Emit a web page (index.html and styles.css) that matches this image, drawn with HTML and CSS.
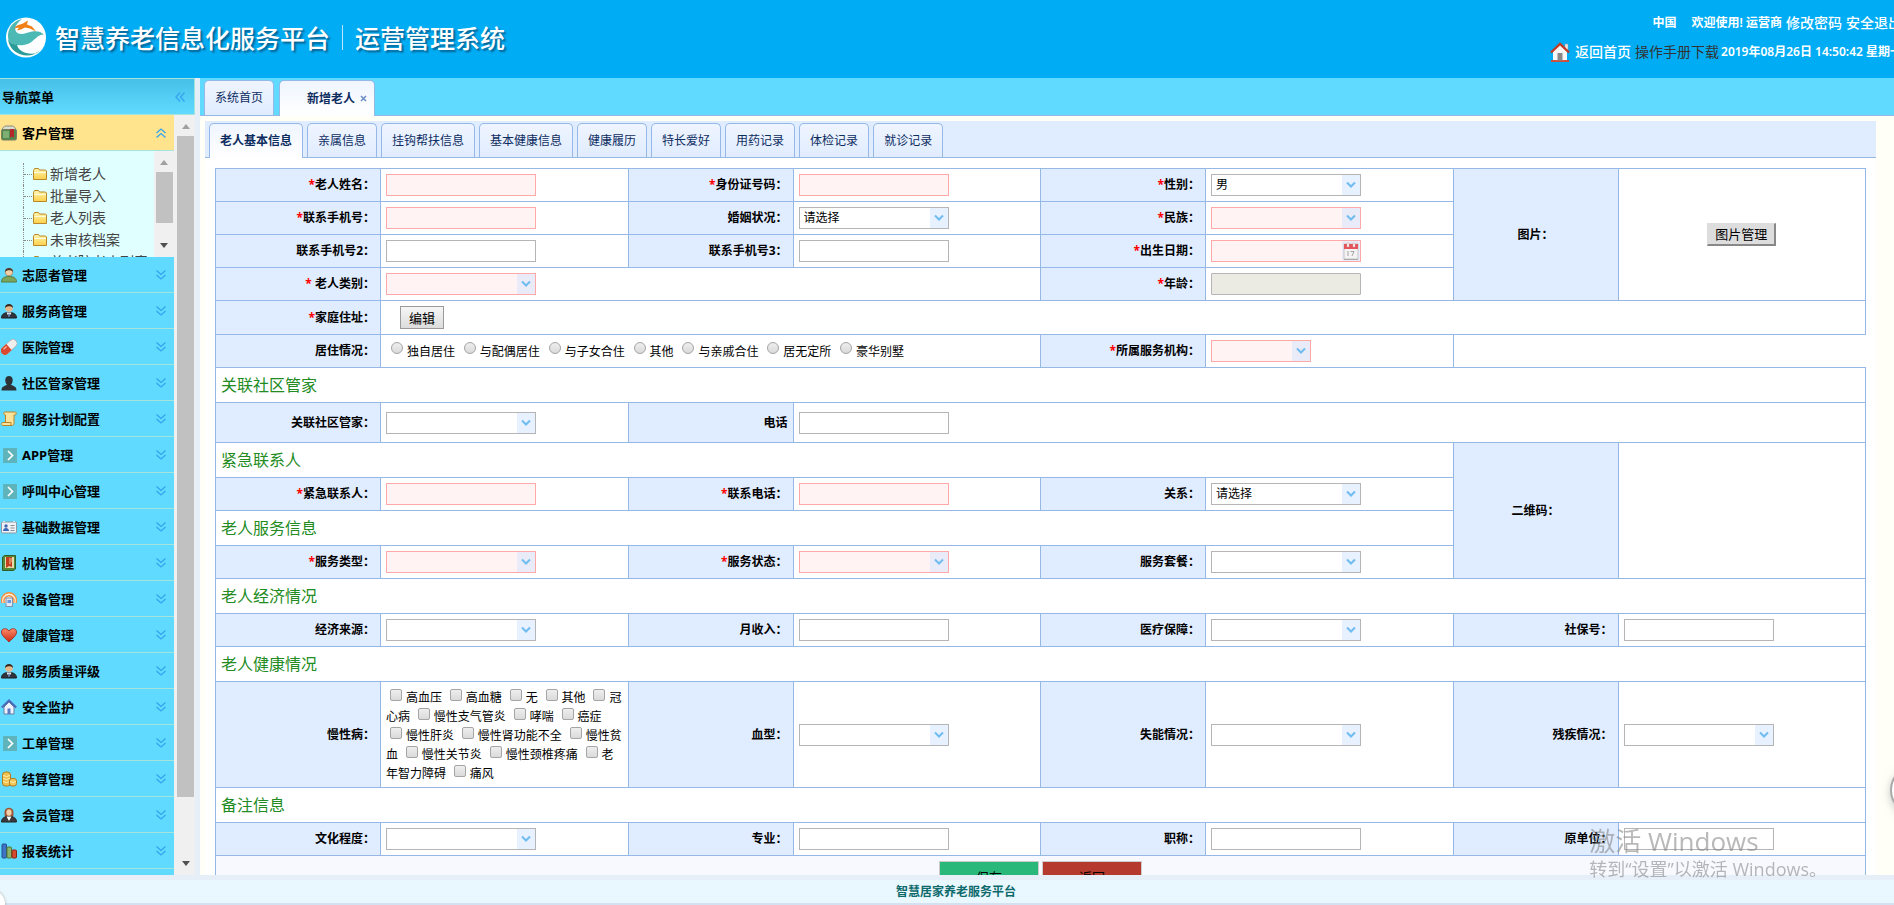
FILE: index.html
```html
<!DOCTYPE html>
<html lang="zh-CN">
<head>
<meta charset="utf-8">
<title>智慧养老信息化服务平台</title>
<link rel="stylesheet" href="styles.css">
</head>
<body>
<svg class="sprite" aria-hidden="true">
  <defs>
    <linearGradient id="gFolder" x1="0" y1="0" x2="0" y2="1"><stop offset="0" stop-color="#fff6b0"/><stop offset="1" stop-color="#ffd04a"/></linearGradient>
    <linearGradient id="gHeart" x1="0" y1="0" x2="0" y2="1"><stop offset="0" stop-color="#ff8a6a"/><stop offset="1" stop-color="#c92a12"/></linearGradient>
  </defs>
  <symbol id="down" viewBox="0 0 10 7"><path d="M1 1l4 4 4-4" fill="none" stroke="#6fbcf0" stroke-width="2"/></symbol>
  <symbol id="dbl" viewBox="0 0 12 12"><path d="M1.500 1.500L6 5.500l4.500-4M1.500 6L6 10l4.500-4" fill="none" stroke="#35a3ee" stroke-width="1.300"/></symbol>
  <symbol id="folder" viewBox="0 0 14 12"><path d="M.5 11.500V2.500l1-2h4l1 1.500h6l1 1v8.500z" fill="url(#gFolder)" stroke="#b8882a"/><path d="M1 4.500h12" stroke="#fffbe0"/></symbol>
  <symbol id="bag" viewBox="0 0 16 16"><path d="M1 6c0-3 2-5 4-5h6c2 0 4 2 4 5z" fill="#d9ddd0" stroke="#8b8b78"/><rect x=".5" y="4.500" width="15" height="10.500" rx="1.500" fill="#4f8a4c" stroke="#7d7d63"/><path d="M2 6h6v7H2z" fill="#7fae72"/><path d="M9 4h4v9l-2-1.500L9 13z" fill="#b5272a"/></symbol>
  <symbol id="green-user" viewBox="0 0 16 16"><path d="M.5 15c0-4 3-5.500 7.500-5.500s7.500 1.500 7.500 5.500z" fill="#7ba55a" stroke="#587a3e"/><circle cx="8" cy="5" r="3.800" fill="#f3cfa8" stroke="#9b6c3e" stroke-width=".6"/><path d="M4 5c-.5-5.500 8.500-5.500 8 0C11 3 6 2.500 4 5z" fill="#4a3a2c"/></symbol>
  <symbol id="suit-user" viewBox="0 0 16 16"><path d="M.5 15c0-4 3-5.500 7.500-5.500s7.500 1.500 7.500 5.500z" fill="#30343a" stroke="#1c1f24"/><path d="M5.500 9.500L8 14l2.500-4.500z" fill="#fff"/><path d="M8 10l1 2-1 2.500L7 12z" fill="#4169a8"/><circle cx="8" cy="5" r="3.800" fill="#e8b98c"/><path d="M4 5c-.5-5.500 8.500-5.500 8 0C11 3 6 2.500 4 5z" fill="#33281f"/></symbol>
  <symbol id="lady" viewBox="0 0 16 16"><path d="M4 10C3 6 3 .8 8 .8S13 6 12 10z" fill="#9c5636"/><path d="M.5 15c0-4 3-5.500 7.500-5.500s7.500 1.500 7.500 5.500z" fill="#3a3a3e" stroke="#222"/><path d="M5.500 9.500L8 14l2.500-4.500z" fill="#fff"/><ellipse cx="8" cy="5.500" rx="2.600" ry="3.300" fill="#f3cfa8"/></symbol>
  <symbol id="dark-user" viewBox="0 0 16 16"><path d="M.5 15.500c0-4 2.500-4.500 5.500-5.500C3 6 4 1 8 1s5 5 2 9c3 1 5.500 1.500 5.500 5.500z" fill="#2c3237"/></symbol>
  <symbol id="pill" viewBox="0 0 16 16"><g transform="rotate(-42 8 8)"><rect x="-1.500" y="4" width="19" height="8" rx="4" fill="#eee" stroke="#999" stroke-width=".6"/><path d="M8 4H2.500a4 4 0 000 8H8z" fill="#d9482f"/><path d="M2.500 6h4" stroke="#ffb9a4" stroke-width="1.200"/></g></symbol>
  <symbol id="scroll" viewBox="0 0 16 16"><path d="M3.500 1h11c1 0 1 3-.5 3h-1v8.500c0 1-1 2-2 2H2c-2 0-2-3 0-3h2.500V4C3 4 2 2 3.500 1z" fill="#fbe39b" stroke="#b98426"/><path d="M2 11.500h8v3" fill="none" stroke="#b98426"/></symbol>
  <symbol id="go" viewBox="0 0 16 16"><rect x="2" y="1" width="14" height="15" fill="#5fb3ba"/><path d="M7 4l4.500 4.500L7 13" fill="none" stroke="#fff" stroke-width="1.700"/></symbol>
  <symbol id="card" viewBox="0 0 16 16"><rect x=".5" y="3" width="15" height="11" rx="1" fill="#eef1f5" stroke="#8b97a6"/><circle cx="5" cy="7" r="1.700" fill="#3b66b5"/><path d="M2 12c0-4 6-4 6 0z" fill="#3b66b5"/><path d="M9.500 6.500h4M9.500 9h4M9.500 11.500h4" stroke="#8a8f96"/><path d="M2 2.500h2M12 2.500h2" stroke="#ddd"/></symbol>
  <symbol id="book" viewBox="0 0 16 16"><path d="M1.500 2l2-1.500h11V14l-2 1.500h-11z" fill="#4f8a3d" stroke="#2f5f24"/><path d="M4 2h9v11H4z" fill="#e6d9a8"/><path d="M5 2h6v10l-3-1-3 2z" fill="#c2401f"/><path d="M8 4h3M8 6h3M8 8h2" stroke="#f5c28c"/></symbol>
  <symbol id="device" viewBox="0 0 16 16"><path d="M1 12A7.500 7.500 0 1115 12M3.500 12a5 5 0 119 0" fill="#fff0e0" stroke="#f0913f" stroke-width="1.400"/><rect x="5" y="7" width="6.500" height="8.500" fill="#dfe8f4" stroke="#7d93b4"/><path d="M6.500 9h3.500v3H6.500z" fill="#6c99dc"/></symbol>
  <symbol id="heart" viewBox="0 0 16 16"><path d="M8 15C4 11 .5 8.500.5 5 .5 1 5.500.500 8 4c2.500-3.500 7.500-3 7.500 1C15.500 8.500 12 11 8 15z" fill="url(#gHeart)" stroke="#a3200f" stroke-width=".8"/></symbol>
  <symbol id="blue-home" viewBox="0 0 16 16"><path d="M3 8l5-5 5 5v7H3z" fill="#eef3fb" stroke="#6a7ea8"/><path d="M.8 8.500L8 1.500l7.200 7" fill="none" stroke="#4b6ab8" stroke-width="2"/><path d="M6.500 9.500h3V15h-3z" fill="#5a79c2"/></symbol>
  <symbol id="coins" viewBox="0 0 16 16"><rect x="1.500" y="1" width="8" height="14" rx="3" fill="#f0c04c" stroke="#b07b1c"/><path d="M2 4.500q3.500 2 7 0M2 7.500q3.500 2 7 0M2 10.500q3.500 2 7 0" fill="none" stroke="#fff0b5"/><rect x="8.500" y="7.500" width="7" height="7.500" rx="2.500" fill="#f2c65a" stroke="#b07b1c"/><path d="M9 10.500q3 2 6 0" fill="none" stroke="#fff0b5"/></symbol>
  <symbol id="chart" viewBox="0 0 16 16"><rect x="1" y="1" width="4.500" height="14" rx="1" fill="#3f74c4" stroke="#234c8c"/><rect x="6" y="4" width="4.500" height="11" rx="1" fill="#8cb56b" stroke="#4e7a33"/><rect x="11" y="7" width="4.500" height="8" rx="1" fill="#d64b30" stroke="#8f2412"/></symbol>
</svg>

<header class="top">
  <div class="brand">
    <svg class="logo" viewBox="0 0 40 40" aria-hidden="true"><circle cx="20" cy="20" r="20" fill="#fff"/><path d="M2 17C3 8 9 3 16 1.500 10 6 8 11 10 14c4 5 10 1 16 0 5-1 9 0 12 3-7 0-9 6-15 9-7 3-16 2-20-2-1-2-1-5-1-7z" fill="#4cb9b5"/><path d="M2 22c2 4 6 5 9 5 1 6 8 10 18 9l5-3c-5 5-13 6-19 4C8 35 3 29 2 22z" fill="#2a9c98"/><path d="M17 6l5-3-1 4 5 2 4 5-6-3-5-1-4 2-4 1 2-3-5 1 3-3z" fill="#f08017"/></svg>
    <h1>智慧养老信息化服务平台<i></i>运营管理系统</h1>
  </div>
  <div class="user">
    <p><b class="place">中国</b><b>欢迎使用! 运营商</b><a href="#">修改密码</a><a href="#">安全退出</a></p>
    <p><svg class="home" viewBox="0 0 20 20" aria-hidden="true"><path d="M15 2h3v6h-3z" fill="#eee" stroke="#999" stroke-width=".6"/><path d="M3 9l7-7 7 7v10H3z" fill="#f7f7f7"/><path d="M1 10.500L10 1.800l9 8.700" fill="none" stroke="#c23a22" stroke-width="2.400"/><path d="M1 19h18" stroke="#d8452c" stroke-width="1.800"/><path d="M7.500 11h5v7.500h-5z" fill="#888"/></svg><a href="#">返回首页</a><a class="manual" href="#">操作手册下载</a><b>2019年08月26日 14:50:42 星期一</b></p>
  </div>
</header>

<div class="middle">
  <aside class="side">
    <div class="side-title"><span>导航菜单</span><svg class="collapse" width="12" height="12" aria-hidden="true"><use href="#dbl"/></svg></div>
    <div class="side-body">
      <nav class="menu">
        <button class="item open"><svg><use href="#bag"/></svg><span>客户管理</span><svg class="arr"><use href="#dbl"/></svg></button>
        <div class="sub">
          <ul>
            <li><svg><use href="#folder"/></svg><a href="#">新增老人</a></li>
            <li><svg><use href="#folder"/></svg><a href="#">批量导入</a></li>
            <li><svg><use href="#folder"/></svg><a href="#">老人列表</a></li>
            <li><svg><use href="#folder"/></svg><a href="#">未审核档案</a></li>
            <li><svg><use href="#folder"/></svg><a href="#">养老院老人列表</a></li>
          </ul>
          <div class="bar inner"><i class="up"></i><i class="thumb"></i><i class="dn"></i></div>
        </div>
        <button class="item"><svg><use href="#green-user"/></svg><span>志愿者管理</span><svg class="arr"><use href="#dbl"/></svg></button>
        <button class="item"><svg><use href="#suit-user"/></svg><span>服务商管理</span><svg class="arr"><use href="#dbl"/></svg></button>
        <button class="item"><svg><use href="#pill"/></svg><span>医院管理</span><svg class="arr"><use href="#dbl"/></svg></button>
        <button class="item"><svg><use href="#dark-user"/></svg><span>社区管家管理</span><svg class="arr"><use href="#dbl"/></svg></button>
        <button class="item"><svg><use href="#scroll"/></svg><span>服务计划配置</span><svg class="arr"><use href="#dbl"/></svg></button>
        <button class="item"><svg><use href="#go"/></svg><span>APP管理</span><svg class="arr"><use href="#dbl"/></svg></button>
        <button class="item"><svg><use href="#go"/></svg><span>呼叫中心管理</span><svg class="arr"><use href="#dbl"/></svg></button>
        <button class="item"><svg><use href="#card"/></svg><span>基础数据管理</span><svg class="arr"><use href="#dbl"/></svg></button>
        <button class="item"><svg><use href="#book"/></svg><span>机构管理</span><svg class="arr"><use href="#dbl"/></svg></button>
        <button class="item"><svg><use href="#device"/></svg><span>设备管理</span><svg class="arr"><use href="#dbl"/></svg></button>
        <button class="item"><svg><use href="#heart"/></svg><span>健康管理</span><svg class="arr"><use href="#dbl"/></svg></button>
        <button class="item"><svg><use href="#suit-user"/></svg><span>服务质量评级</span><svg class="arr"><use href="#dbl"/></svg></button>
        <button class="item"><svg><use href="#blue-home"/></svg><span>安全监护</span><svg class="arr"><use href="#dbl"/></svg></button>
        <button class="item"><svg><use href="#go"/></svg><span>工单管理</span><svg class="arr"><use href="#dbl"/></svg></button>
        <button class="item"><svg><use href="#coins"/></svg><span>结算管理</span><svg class="arr"><use href="#dbl"/></svg></button>
        <button class="item"><svg><use href="#lady"/></svg><span>会员管理</span><svg class="arr"><use href="#dbl"/></svg></button>
        <button class="item"><svg><use href="#chart"/></svg><span>报表统计</span><svg class="arr"><use href="#dbl"/></svg></button>
      </nav>
      <div class="bar outer"><i class="up"></i><i class="thumb"></i><i class="dn"></i></div>
    </div>
  </aside>

  <main class="main">
    <div class="tabs outer-tabs">
      <button class="tab">系统首页</button>
      <button class="tab on closable">新增老人<svg width="7" height="7" viewBox="0 0 7 7" aria-hidden="true"><path d="M1 1l5 5M6 1L1 6" stroke="#6a8fc4" stroke-width="1.500"/></svg></button>
    </div>
    <div class="panel">
      <div class="tabs inner-tabs">
        <button class="tab on">老人基本信息</button>
        <button class="tab">亲属信息</button>
        <button class="tab">挂钩帮扶信息</button>
        <button class="tab">基本健康信息</button>
        <button class="tab">健康履历</button>
        <button class="tab">特长爱好</button>
        <button class="tab">用药记录</button>
        <button class="tab">体检记录</button>
        <button class="tab">就诊记录</button>
      </div>
      <form class="form">
        <table>
          <colgroup><col class="cl"><col class="cv"><col class="cl"><col class="cv"><col class="cl"><col class="cv"><col class="cl"><col class="cv"></colgroup>
          <tr>
            <th><label for="f1"><em>*</em>老人姓名：</label></th><td><input class="box req" id="f1"></td>
            <th><label for="f2"><em>*</em>身份证号码：</label></th><td><input class="box req" id="f2"></td>
            <th><label for="f3"><em>*</em>性别：</label></th><td><span class="combo"><select id="f3"><option>男</option><option>女</option></select><svg><use href="#down"/></svg></span></td>
            <th rowspan="4" class="mid">图片：</th><td rowspan="4" class="mid"><button type="button" class="pic">图片管理</button></td>
          </tr>
          <tr>
            <th><label for="f4"><em>*</em>联系手机号：</label></th><td><input class="box req" id="f4"></td>
            <th><label for="f5">婚姻状况：</label></th><td><span class="combo"><select id="f5"><option>请选择</option></select><svg><use href="#down"/></svg></span></td>
            <th><label for="f6"><em>*</em>民族：</label></th><td><span class="combo req"><select id="f6"><option></option></select><svg><use href="#down"/></svg></span></td>
          </tr>
          <tr>
            <th><label for="f7">联系手机号2：</label></th><td><input class="box" id="f7"></td>
            <th><label for="f8">联系手机号3：</label></th><td><input class="box" id="f8"></td>
            <th><label for="f9"><em>*</em>出生日期：</label></th><td><span class="combo req"><input id="f9"><svg class="cal" viewBox="0 0 18 20"><rect x="2" y="3" width="14" height="15" fill="#f4f2f2" stroke="#bbb" stroke-width=".8"/><path d="M2 3h14v5H2z" fill="#e4555c"/><path d="M5 2h2v4H5zM11 2h2v4h-2z" fill="#fff" stroke="#c99" stroke-width=".5"/><path d="M6 10v5M8.500 10.500H12L10 15" fill="none" stroke="#a5a5a5"/><path d="M2 18.500h14" stroke="#aaa"/></svg></span></td>
          </tr>
          <tr>
            <th><label for="f10"><em>*</em> 老人类别：</label></th><td colspan="3"><span class="combo req"><select id="f10"><option></option></select><svg><use href="#down"/></svg></span></td>
            <th><label for="f11"><em>*</em>年龄：</label></th><td><input class="box off" id="f11" disabled></td>
          </tr>
          <tr>
            <th><em>*</em>家庭住址：</th><td colspan="7"><button type="button" class="edit">编辑</button></td>
          </tr>
          <tr>
            <th>居住情况：</th>
            <td colspan="3" class="opts radios"><label><input type="radio" name="live">独自居住</label> <label><input type="radio" name="live">与配偶居住</label> <label><input type="radio" name="live">与子女合住</label> <label><input type="radio" name="live">其他</label> <label><input type="radio" name="live">与亲戚合住</label> <label><input type="radio" name="live">居无定所</label> <label><input type="radio" name="live">豪华别墅</label></td>
            <th><label for="f12"><em>*</em>所属服务机构：</label></th><td><span class="combo req short"><select id="f12"><option></option></select><svg><use href="#down"/></svg></span></td>
          </tr>
          <tr><td colspan="8" class="sec">关联社区管家</td></tr>
          <tr class="tall">
            <th><label for="f13">关联社区管家：</label></th><td><span class="combo"><select id="f13"><option></option></select><svg><use href="#down"/></svg></span></td>
            <th><label for="f14">电话</label></th><td colspan="5"><input class="box" id="f14"></td>
          </tr>
          <tr><td colspan="6" class="sec">紧急联系人</td><th rowspan="4" class="mid">二维码：</th><td rowspan="4"></td></tr>
          <tr>
            <th><label for="f15"><em>*</em>紧急联系人：</label></th><td><input class="box req" id="f15"></td>
            <th><label for="f16"><em>*</em>联系电话：</label></th><td><input class="box req" id="f16"></td>
            <th><label for="f17">关系：</label></th><td><span class="combo"><select id="f17"><option>请选择</option></select><svg><use href="#down"/></svg></span></td>
          </tr>
          <tr><td colspan="6" class="sec">老人服务信息</td></tr>
          <tr>
            <th><label for="f18"><em>*</em>服务类型：</label></th><td><span class="combo req"><select id="f18"><option></option></select><svg><use href="#down"/></svg></span></td>
            <th><label for="f19"><em>*</em>服务状态：</label></th><td><span class="combo req"><select id="f19"><option></option></select><svg><use href="#down"/></svg></span></td>
            <th><label for="f20">服务套餐：</label></th><td><span class="combo"><select id="f20"><option></option></select><svg><use href="#down"/></svg></span></td>
          </tr>
          <tr><td colspan="8" class="sec">老人经济情况</td></tr>
          <tr>
            <th><label for="f21">经济来源：</label></th><td><span class="combo"><select id="f21"><option></option></select><svg><use href="#down"/></svg></span></td>
            <th><label for="f22">月收入：</label></th><td><input class="box" id="f22"></td>
            <th><label for="f23">医疗保障：</label></th><td><span class="combo"><select id="f23"><option></option></select><svg><use href="#down"/></svg></span></td>
            <th><label for="f24">社保号：</label></th><td><input class="box" id="f24"></td>
          </tr>
          <tr><td colspan="8" class="sec">老人健康情况</td></tr>
          <tr>
            <th>慢性病：</th>
            <td class="opts checks"><label><input type="checkbox">高血压</label> <label><input type="checkbox">高血糖</label> <label><input type="checkbox">无</label> <label><input type="checkbox">其他</label> <label><input type="checkbox">冠心病</label> <label><input type="checkbox">慢性支气管炎</label> <label><input type="checkbox">哮喘</label> <label><input type="checkbox">癌症</label> <label><input type="checkbox">慢性肝炎</label> <label><input type="checkbox">慢性肾功能不全</label> <label><input type="checkbox">慢性贫血</label> <label><input type="checkbox">慢性关节炎</label> <label><input type="checkbox">慢性颈椎疼痛</label> <label><input type="checkbox">老年智力障碍</label> <label><input type="checkbox">痛风</label></td>
            <th><label for="f25">血型：</label></th><td><span class="combo"><select id="f25"><option></option></select><svg><use href="#down"/></svg></span></td>
            <th><label for="f26">失能情况：</label></th><td><span class="combo"><select id="f26"><option></option></select><svg><use href="#down"/></svg></span></td>
            <th><label for="f27">残疾情况：</label></th><td><span class="combo"><select id="f27"><option></option></select><svg><use href="#down"/></svg></span></td>
          </tr>
          <tr><td colspan="8" class="sec">备注信息</td></tr>
          <tr>
            <th><label for="f28">文化程度：</label></th><td><span class="combo"><select id="f28"><option></option></select><svg><use href="#down"/></svg></span></td>
            <th><label for="f29">专业：</label></th><td><input class="box" id="f29"></td>
            <th><label for="f30">职称：</label></th><td><input class="box" id="f30"></td>
            <th><label for="f31">原单位：</label></th><td><input class="box" id="f31"></td>
          </tr>
          <tr><td colspan="8" class="actions"><div><button type="button" class="act save">保存</button><button type="button" class="act back">返回</button></div></td></tr>
        </table>
      </form>
    </div>
  </main>
</div>

<footer class="foot">智慧居家养老服务平台</footer>

<div class="ball right-ball"></div>
<div class="ball left-ball"></div>
<div class="activate"><strong>激活 Windows</strong><span>转到“设置”以激活 Windows。</span></div>
</body>
</html>
```
FILE: styles.css
```css
* { box-sizing: border-box; }
html, body { height: 100%; }
body {
  margin: 0;
  display: flex;
  flex-direction: column;
  overflow: hidden;
  background: #e6eef8;
  font: 12px/20px "Noto Sans", "Noto Sans CJK SC", sans-serif;
  color: #000;
}
button, input, select { font: inherit; color: inherit; margin: 0; }
a { text-decoration: none; color: inherit; }
.sprite { position: absolute; width: 0; height: 0; }

/* header */
.top {
  flex: none;
  height: 78px;
  display: flex;
  justify-content: space-between;
  overflow: hidden;
  background: #00adf5;
  color: #fff;
}
.brand { display: flex; align-items: flex-start; gap: 9px; padding: 17px 0 0 6px; }
.logo { width: 40px; height: 41px; }
.brand h1 {
  display: flex;
  align-items: center;
  margin: 0;
  font: 500 25px/40px "Noto Sans CJK SC", sans-serif;
  text-shadow: 2px 2px 2px #05608f;
}
.brand h1 i { width: 1px; height: 25px; margin: 0 12px; background: #b9e6fb; }
.user { margin-right: -8px; padding-top: 8px; }
.user p {
  display: flex;
  justify-content: flex-end;
  align-items: center;
  height: 29px;
  margin: 0;
  white-space: nowrap;
}
.user p b { font-weight: 600; }
.user a { margin-left: 4px; font-size: 14px; font-weight: 500; }
.user .place { margin-right: 15px; }
.user .manual { margin-right: 2px; color: #333; font-weight: 400; }
.home { width: 20px; height: 20px; margin-right: 1px; }

.middle { flex: 1; min-height: 0; display: flex; margin-bottom: 5px; }

/* sidebar */
.side { flex: none; width: 195px; margin-right: 5px; display: flex; flex-direction: column; background: #f0f0f0; }
.side-title {
  flex: none;
  height: 37px;
  display: flex;
  align-items: center;
  justify-content: space-between;
  padding: 0 8px 0 2px;
  border: 1px solid #a5e3df;
  border-left: 0;
  background: linear-gradient(#47c0e8, #60dbff);
  font-size: 13px;
  font-weight: 700;
}
.collapse { transform: rotate(90deg); }
.side-body { flex: 1; min-height: 0; display: flex; justify-content: space-between; }
.menu { width: 174px; overflow: hidden; background: #60dbff; }
.item {
  display: flex;
  align-items: center;
  width: 100%;
  height: 36px;
  padding: 0 7px 0 1px;
  border: 0;
  border-bottom: 1px solid #a5e3df;
  background: #60dbff;
  font-size: 13px;
  font-weight: 700;
  text-align: left;
}
.item svg { width: 16px; height: 16px; margin-right: 5px; }
.item span { flex: 1; }
.item .arr { width: 12px; height: 12px; margin: 0; }
.item.open { background: #ffe48d; }
.item.open .arr { transform: rotate(180deg); }
.sub { display: flex; justify-content: space-between; height: 106px; overflow: hidden; background: #e0ffff; }
.sub ul { margin: 0; padding: 12px 0 0 23px; list-style: none; overflow: hidden; }
.sub li {
  display: flex;
  align-items: center;
  height: 22px;
  border-left: 1px dotted #888;
  font-size: 14px;
  color: #444;
  white-space: nowrap;
}
.sub li::before { content: ""; width: 8px; margin-right: 1px; border-top: 1px dotted #888; }
.sub li svg { width: 14px; height: 12px; margin-right: 3px; }
.bar { flex: none; display: flex; flex-direction: column; align-items: center; background: #f0f0f0; }
.bar i { display: block; }
.bar .up, .bar .dn { width: 0; height: 0; border: 4px solid transparent; }
.bar .up { border-top: 0; border-bottom: 5px solid #a0a0a0; margin: 9px 0 7px; }
.bar .dn { border-bottom: 0; border-top: 5px solid #505050; margin-bottom: 9px; }
.bar .thumb { width: 17px; background: #c1c1c1; }
.bar.inner { width: 20px; }
.inner .thumb { height: 51px; margin-bottom: 20px; }
.bar.outer { width: 19px; }
.outer .thumb { flex: 1; margin-bottom: 64px; }

/* tabs */
.main { flex: 1; min-width: 0; display: flex; flex-direction: column; background: #fffff8; }
.tabs { flex: none; display: flex; align-items: flex-end; border-bottom: 1px solid #95b8e7; }
.tab {
  border: 1px solid #95b8e7;
  border-bottom: 0;
  border-radius: 5px 5px 0 0;
  padding: 0 10px;
  background: linear-gradient(#eff5ff, #e0ecff);
  color: #0e2d5f;
}
.tab.on { background: linear-gradient(#eff5ff, #fff); font-weight: 700; margin-bottom: -1px; }
.outer-tabs { height: 38px; gap: 5px; padding-left: 4px; background: #60dbff; }
.outer-tabs .tab { height: 35px; }
.outer-tabs .tab.on { height: 36px; }
.closable { display: flex; align-items: center; gap: 5px; padding: 0 7px 0 27px; }
.inner-tabs { height: 37px; gap: 4px; padding-left: 4px; background: #e0ecff; }
.inner-tabs .tab { height: 34px; }
.inner-tabs .tab.on { height: 35px; }

/* form */
.panel { flex: 1; min-height: 0; margin: 5px 18px 0 5px; overflow: hidden; background: #fff; }
.form { padding: 10px; }
table { width: 100%; table-layout: fixed; border-collapse: collapse; }
.cl { width: 10%; }
.cv { width: 15%; }
th, td { border: 1px solid #95b8e7; padding: 5px; text-align: left; }
th { background: #e0ecff; text-align: right; font-weight: 700; line-height: 20px; }
th.mid, td.mid { text-align: center; }
em { font-style: normal; color: #f00; }
.tall { height: 40px; }
.sec { font-size: 16px; line-height: 24px; color: #228b22; }
.box, .combo { width: 150px; height: 22px; border: 1px solid #b5b5b5; background: #fff; }
.box { display: block; padding: 0 4px; outline: 0; }
.combo { display: grid; grid-template-columns: 1fr 18px; }
.combo select, .combo input {
  grid-area: 1 / 1 / 2 / 3;
  appearance: none;
  width: 100%;
  height: 20px;
  padding: 0 18px 0 4px;
  border: 0;
  outline: 0;
  background: none;
}
.combo svg { grid-area: 1 / 2; width: 18px; height: 20px; padding: 6px 4px; background: #e8f1ff; pointer-events: none; }
.combo .cal { padding: 0; }
.req { border-color: #ffa8a8; background: #fff3f3; }
.req svg { background: #eaebf8; }
.short { width: 100px; }
.off { background: #ebebe4; border-radius: 1px; }
.edit {
  display: block;
  height: 23px;
  margin-left: 14px;
  padding: 0 8px;
  border: 1px solid #9a9a9a;
  background: linear-gradient(#f6f6f6, #dcdcdc);
  font-size: 13px;
  line-height: 20px;
}
.pic {
  height: 23px;
  padding: 0 7px;
  border: 1px solid #ddd;
  border-right: 2px solid #888;
  border-bottom: 2px solid #888;
  background: #ddd;
  font-size: 13px;
  line-height: 20px;
}
.opts { font-family: "DejaVu Sans", "Noto Sans CJK SC", sans-serif; line-height: 19px; }
.opts input { appearance: none; width: 12px; height: 12px; margin: 0 4px 1px; border: 1px solid #a5a5a5; background: linear-gradient(#eee, #dadada); }
.radios { padding: 6px 5px 4px; line-height: 22px; }
.radios input { border-radius: 50%; margin: 0 4px 2px 5px; }
.checks { padding: 7px 5px 3px; }
.checks input { border-radius: 2px; }
.actions { background: #f7f9ff; }
.actions div { display: flex; justify-content: center; gap: 3px; }
.act { width: 100px; height: 32px; border: 1px solid #ccc; font-size: 13px; }
.save { background: #29b87a; }
.back { background: #b5392c; }

/* footer */
.foot {
  flex: none;
  height: 25px;
  padding-left: 18px;
  border-bottom: 2px solid #d3e1f1;
  background: #e9f8fe;
  color: #0e6a6c;
  font-weight: 700;
  line-height: 23px;
  text-align: center;
}

/* floating layers */
.ball { position: fixed; border-radius: 50%; background: #fff; }
.right-ball { right: -46px; bottom: 90px; width: 50px; height: 50px; border: 2px solid #aaa; box-shadow: 0 3px 8px #9998; }
.left-ball { left: -22px; bottom: -12px; width: 27px; height: 27px; box-shadow: 0 0 3px #aaa; }
.activate {
  position: fixed;
  right: 67px;
  bottom: 24px;
  display: grid;
  color: rgba(125, 125, 125, .55);
  font-family: "Open Sans", "Noto Sans CJK SC", sans-serif;
  pointer-events: none;
}
.activate strong { font-size: 26px; font-weight: 400; line-height: 32px; }
.activate span { font-size: 18px; line-height: 24px; }
```
